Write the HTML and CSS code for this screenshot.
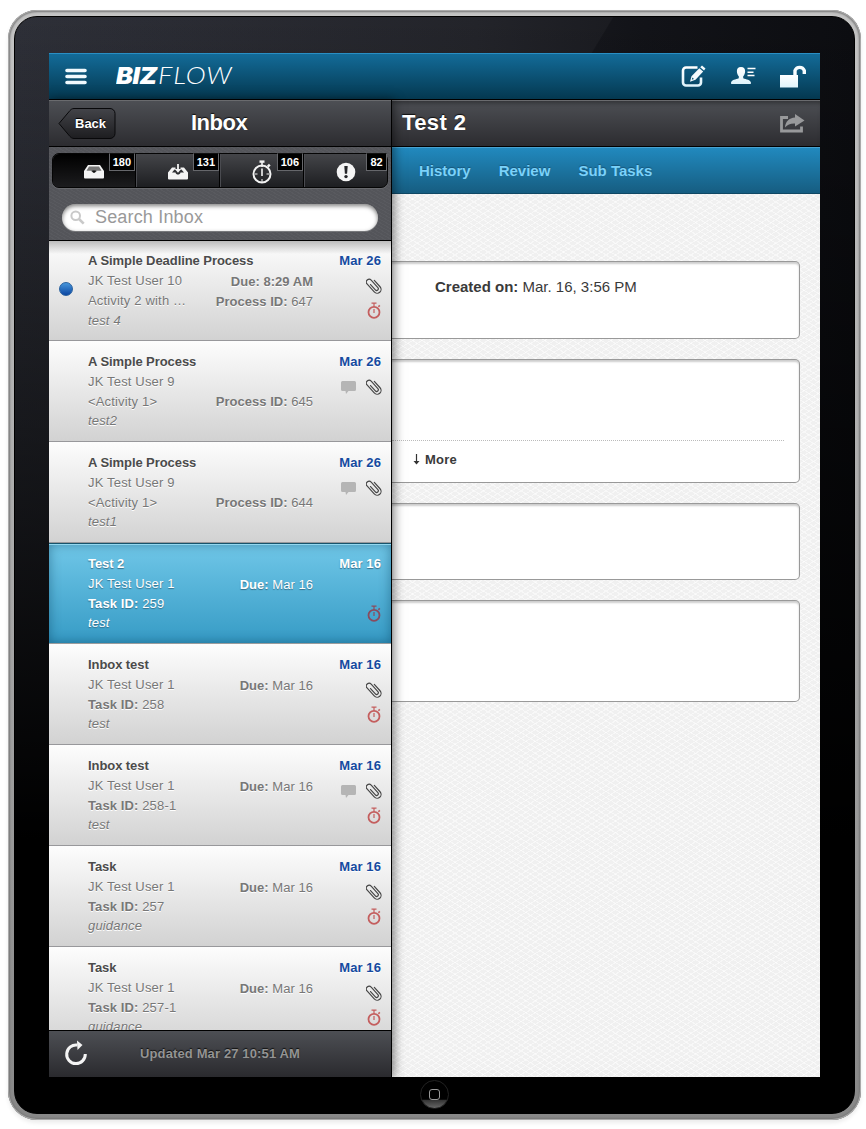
FILE: index.html
```html
<!DOCTYPE html>
<html lang="en">
<head>
<meta charset="utf-8">
<title>BizFlow Inbox</title>
<link rel="stylesheet" href="styles.css">
</head>
<body>
<svg class="defs" width="0" height="0">
  <defs>
    <linearGradient id="ice" x1="0" y1="0" x2="0" y2="1"><stop offset="0" stop-color="#fff"/><stop offset="1" stop-color="#dff3fb"/></linearGradient>
    <symbol id="clip" viewBox="0 0 16 18"><g transform="rotate(-42 8 9)" fill="none" stroke="#444" stroke-width="1.15" stroke-linecap="round"><path d="M12 5v8.600a3.900 3.900 0 0 1-7.800 0V2.800a2.800 2.800 0 0 1 5.600 0v10a1.700 1.700 0 0 1-3.400 0V5.600"/></g></symbol>
    <symbol id="watch" viewBox="0 0 14 17"><g fill="none" stroke="currentColor"><circle cx="7" cy="10.3" r="5.5" stroke-width="1.8"/><path d="M4.500 1.200h5M7 1v3.500M7 7v4" stroke-width="1.200"/><path d="M11.400 4.800l1.400-1.400" stroke-width="1.600"/></g></symbol>
    <symbol id="bubble" viewBox="0 0 15 13"><path d="M1.500 0h12A1.500 1.500 0 0 1 15 1.500v7a1.500 1.500 0 0 1-1.500 1.500H7.500L5 13l-.5-3h-3A1.500 1.500 0 0 1 0 8.500v-7A1.500 1.500 0 0 1 1.500 0z" fill="#b5b5b5"/></symbol>
  </defs>
</svg>
<div class="device">
 <div class="bezel">
  <div class="screen">
   <header class="topbar">
    <svg class="menu" width="22" height="17" viewBox="0 0 22 17"><path d="M2 2.500h18M2 8.500h18M2 14.500h18" stroke="#f1fafe" stroke-width="3.600" stroke-linecap="round"/></svg>
    <div class="logo"><b>BIZ</b><span>FLOW</span></div>
    <div class="actions">
     <svg width="25" height="24" viewBox="0 0 25 24"><path d="M16.500 3.500H5a3 3 0 0 0-3 3v12a3 3 0 0 0 3 3h12a3 3 0 0 0 3-3v-5" fill="none" stroke="url(#ice)" stroke-width="2.600"/><path d="M21 1.500l3.500 3-1.500 2-3.800-3.200zM18.300 4.200l3.900 3.300-7.700 8.300-5.500 1.900 1.500-5.500z" fill="#f4fbfe"/><path d="M11.300 13.500l1.700 1.600-2.200.7z" fill="#0b5575"/></svg>
     <svg width="26" height="20" viewBox="0 0 26 20"><path d="M11 1c3 0 4.300 1.900 4.100 4.500-.1 2.200-.9 3.800-1.900 4.800v2c3 1.200 7.300 1.500 7.800 4.500.1 1-.3 1.200-1 1.200H2c-.7 0-1.100-.2-1-1.200.5-3 4.800-3.300 7.800-4.500v-2c-1-1-1.800-2.600-1.900-4.800C6.700 2.900 8 1 11 1z" fill="url(#ice)"/><path d="M17.500 2.600h8M17.500 6.200h6M17.500 9.600h7" stroke="#fff" stroke-width="1.500"/></svg>
     <svg width="26" height="24" viewBox="0 0 26 24"><path d="M0 11h18v12.500H0z" fill="url(#ice)"/><path d="M15 12V6.500a5 5 0 0 1 9.300 0V10" fill="none" stroke="#f8fdff" stroke-width="3.400"/></svg>
    </div>
   </header>
   <div class="body">
    <aside class="side">
     <div class="titlebar">
      <div class="back"><svg width="58" height="33" viewBox="0 0 58 33"><defs><linearGradient id="bk" x1="0" y1="0" x2="0" y2="1"><stop offset="0" stop-color="#434449"/><stop offset="1" stop-color="#1d1d20"/></linearGradient></defs><path d="M16 1.500h36a5 5 0 0 1 5 5v20a5 5 0 0 1-5 5H16c-2 0-3-1-4-2L1 16.500 12 3.500c1-1 2-2 4-2z" fill="url(#bk)" stroke="#08080a"/></svg><span>Back</span></div>
      <h1>Inbox</h1>
     </div>
     <div class="filters">
      <nav class="tabs">
       <div class="tab on"><svg width="22" height="16" viewBox="0 0 22 16"><path d="M5 1h12l4 6v6.500a1 1 0 0 1-1 1H2a1 1 0 0 1-1-1V7z" fill="#f4f4f4"/><path d="M6 2.500h10l2.500 4.300h-4.700c-.5 2.400-5.100 2.400-5.600 0H3.500z" fill="#777"/><path d="M9.300 6.500h3.400v1.200L11 9 9.300 7.700z" fill="#111"/></svg><i>180</i></div>
       <div class="tab"><svg width="22" height="18" viewBox="0 0 22 18"><path d="M5 4.500h3.500v2H7.500L5 9.500h3.500c.5 2.800 4.500 2.800 5 0H17l-2.500-3h-1v-2H17l4 5v6a1 1 0 0 1-1 1H2a1 1 0 0 1-1-1v-6z" fill="#f4f4f4"/><path d="M10.100 1h1.800v5h2.300L11 9.800 7.800 6h2.300z" fill="#f4f4f4"/></svg><i>131</i></div>
       <div class="tab"><svg width="22" height="24" viewBox="0 0 22 24"><g fill="none" stroke="#f3f3f3"><circle cx="11" cy="14" r="8.500" stroke-width="2"/><path d="M8.500 1.600h5" stroke-width="2.400"/><path d="M11 2v5M11 8.500V16" stroke-width="1.600"/><path d="M16.800 6.700l2-2" stroke-width="2.400"/><path d="M4 14h2.500M15.500 14H18M11 19v3" stroke-width="1"/></g></svg><i>106</i></div>
       <div class="tab"><svg width="20" height="20" viewBox="0 0 20 20"><circle cx="10" cy="10" r="9.300" fill="#f5f5f5"/><path d="M8.300 4h3.400l-.6 7.800H8.900z" fill="#252629"/><circle cx="10" cy="14.600" r="1.700" fill="#252629"/></svg><i>82</i></div>
      </nav>
      <div class="search"><svg width="15" height="15" viewBox="0 0 15 15"><circle cx="5.700" cy="5.700" r="4.300" fill="none" stroke="#c9c9c9" stroke-width="2"/><path d="M9 9l4.700 4.700" stroke="#c9c9c9" stroke-width="2.600"/></svg><span>Search Inbox</span></div>
     </div>
     <div class="list">
      <div class="row first"><div class="mark"><div class="dot"></div></div><div class="left"><h2>A Simple Deadline Process</h2><p>JK Test User 10</p><p>Activity 2 with …</p><em class="low">test 4</em></div><div class="mid"><p><b>Due: 8:29 AM</b></p><p><b>Process ID:</b> 647</p></div><div class="right"><h3>Mar 26</h3><svg class="c"><use href="#clip"/></svg><svg class="w"><use href="#watch"/></svg></div></div>
      <div class="row plain"><div class="mark"></div><div class="left"><h2>A Simple Process</h2><p>JK Test User 9</p><p>&lt;Activity 1&gt;</p><em>test2</em></div><div class="mid"><p></p><p><b>Process ID:</b> 645</p></div><div class="right"><h3>Mar 26</h3><svg class="b"><use href="#bubble"/></svg><svg class="c"><use href="#clip"/></svg></div></div>
      <div class="row plain"><div class="mark"></div><div class="left"><h2>A Simple Process</h2><p>JK Test User 9</p><p>&lt;Activity 1&gt;</p><em>test1</em></div><div class="mid"><p></p><p><b>Process ID:</b> 644</p></div><div class="right"><h3>Mar 26</h3><svg class="b"><use href="#bubble"/></svg><svg class="c"><use href="#clip"/></svg></div></div>
      <div class="row sel"><div class="mark"></div><div class="left"><h2>Test 2</h2><p>JK Test User 1</p><p><b>Task ID:</b> 259</p><em>test</em></div><div class="mid"><p><b>Due:</b> Mar 16</p></div><div class="right"><h3>Mar 16</h3><svg class="w"><use href="#watch"/></svg></div></div>
      <div class="row"><div class="mark"></div><div class="left"><h2>Inbox test</h2><p>JK Test User 1</p><p><b>Task ID:</b> 258</p><em>test</em></div><div class="mid"><p><b>Due:</b> Mar 16</p></div><div class="right"><h3>Mar 16</h3><svg class="c"><use href="#clip"/></svg><svg class="w"><use href="#watch"/></svg></div></div>
      <div class="row"><div class="mark"></div><div class="left"><h2>Inbox test</h2><p>JK Test User 1</p><p><b>Task ID:</b> 258-1</p><em>test</em></div><div class="mid"><p><b>Due:</b> Mar 16</p></div><div class="right"><h3>Mar 16</h3><svg class="b"><use href="#bubble"/></svg><svg class="c"><use href="#clip"/></svg><svg class="w"><use href="#watch"/></svg></div></div>
      <div class="row"><div class="mark"></div><div class="left"><h2>Task</h2><p>JK Test User 1</p><p><b>Task ID:</b> 257</p><em>guidance</em></div><div class="mid"><p><b>Due:</b> Mar 16</p></div><div class="right"><h3>Mar 16</h3><svg class="c"><use href="#clip"/></svg><svg class="w"><use href="#watch"/></svg></div></div>
      <div class="row"><div class="mark"></div><div class="left"><h2>Task</h2><p>JK Test User 1</p><p><b>Task ID:</b> 257-1</p><em>guidance</em></div><div class="mid"><p><b>Due:</b> Mar 16</p></div><div class="right"><h3>Mar 16</h3><svg class="c"><use href="#clip"/></svg><svg class="w"><use href="#watch"/></svg></div></div>
     </div>
     <footer class="status"><svg width="24" height="26" viewBox="0 0 24 26"><path d="M13.500 5.100A9.300 9.300 0 1 0 21.300 14" fill="none" stroke="#f4f4f4" stroke-width="3"/><path d="M13 .5l5.500 4.500-5 5z" fill="#f4f4f4"/></svg><span>Updated Mar 27 10:51 AM</span></footer>
    </aside>
    <main class="detail">
     <div class="titlebar"><h1>Test 2</h1><svg width="26" height="20" viewBox="0 0 26 20"><path d="M9 3.500H2.500v13.500h20V12.500" fill="none" stroke="#98999b" stroke-width="2.800"/><path d="M16 0l9.500 6.500-9.500 6V9.500C11.500 9.300 8.500 10.500 6 13.500 6.500 7.500 10 4 16 3.500z" fill="#98999b"/></svg></div>
     <nav class="links"><span>History</span><span>Review</span><span>Sub Tasks</span></nav>
     <div class="cards">
      <section class="card k1"><p><b>Created on:</b> Mar. 16, 3:56 PM</p></section>
      <section class="card k2"><div class="more"><svg width="7" height="11" viewBox="0 0 7 11"><path d="M3.500 0v9" stroke="#333" stroke-width="1.200"/><path d="M.5 7h6l-3 3.500z" fill="#333"/></svg><b>More</b></div></section>
      <section class="card k3"></section>
      <section class="card k4"></section>
     </div>
    </main>
   </div>
  </div>
  <div class="home"><div></div></div>
 </div>
</div>
</body>
</html>
```

FILE: styles.css
```css
* { box-sizing: border-box; }
body { margin: 0; height: 1129px; overflow: hidden; background: #fff; font-family: "Liberation Sans", Arial, sans-serif; padding: 10px 0 0 8px; }
h1, h2, h3, p { margin: 0; }
.defs { position: absolute; }
svg { display: block; flex: none; }
.device { width: 853px; height: 1110px; padding: 6px; border-radius: 29px; background: linear-gradient(#c4c4c4, #aaa 50%, #888); box-shadow: inset 0 0 0 1px #aaa, inset 0 0 2px 2px #777, 0 3px 4px rgba(0,0,0,.08); }
.bezel { width: 841px; height: 1098px; border: 1px solid #000; border-radius: 23px; padding: 36px 0 0 34px; background: linear-gradient(to bottom, rgba(0,0,0,0), #000 75%), linear-gradient(121deg, rgba(255,255,255,.03) 39.9%, transparent 40%), linear-gradient(to right, #272932, #1c1d23 55%, #121318 75%, #0c0d11); }
.screen { width: 771px; height: 1024px; display: flex; flex-direction: column; overflow: hidden; }
.topbar { height: 47px; flex: none; display: flex; align-items: center; border-top: 1px solid #2a8fc4; border-bottom: 1px solid #000; background: linear-gradient(#136b98, #043850); padding: 0 14px 0 16px; }
.logo { display: flex; align-items: baseline; margin-left: 29px; color: #fff; line-height: 26px; margin-top: -3px; width: 125px; white-space: nowrap; }
.logo b { display: block; width: 42px; font: italic 900 23px/26px Inter, sans-serif; letter-spacing: -.4px; transform: scaleX(1.1); transform-origin: left; }
.logo span { display: block; font: italic 300 23.500px/26px Lato, sans-serif; letter-spacing: .8px; transform: scaleX(1.15); transform-origin: left; }
.actions { margin-left: auto; display: flex; gap: 24px; align-items: center; margin-top: -2px; }
.body { flex: 1; min-height: 0; display: flex; }
.side { width: 343px; border-right: 1px solid #000; display: flex; flex-direction: column; flex: none; position: relative; z-index: 1; box-shadow: 2px 0 10px rgba(0,0,0,.5); }
.titlebar { height: 47px; flex: none; display: flex; align-items: center; background: linear-gradient(#4d4f54, #2c2c30); border-top: 1px solid #6a6b6e; border-bottom: 1px solid #000; color: #fff; }
.titlebar h1 { font-size: 22px; line-height: 26px; padding-bottom: 2px; letter-spacing: .4px; text-shadow: 0 -1px 1px #111; }
.back { display: grid; margin-left: 9px; width: 58px; }
.back > * { grid-area: 1 / 1; }
.back span { align-self: center; padding-left: 17px; font-size: 13px; font-weight: bold; text-shadow: 0 -1px 1px #000; }
.side .titlebar h1 { margin-left: 75px; letter-spacing: -.5px; }
.filters { height: 94px; flex: none; border-bottom: 1px solid #000; background: repeating-linear-gradient(30deg, rgba(255,255,255,.03) 0 1px, transparent 1px 3px), #54555a; padding: 6px 3px 0; }
.tabs { display: flex; height: 35px; border: 1px solid #050505; border-radius: 7px; background: linear-gradient(#444549, #1d1e21); box-shadow: 0 1px 0 #68696d; }
.tab { flex: 1; display: grid; place-items: center; position: relative; border-right: 1px solid #000; border-left: 1px solid #4a4b50; padding: 3px 1px 0 0; }
.tab:last-child { border-right: 0; }
.tab:first-child { border-left: 0; }
.tab.on { background: linear-gradient(#000, #1c1c1e); border-radius: 6px 0 0 6px; }
.tab i { position: absolute; right: 0; top: -1px; height: 18px; min-width: 21px; padding: 0 3px; border: 1px solid #66676b; border-top-color: #111; background: #000; color: #fff; font: bold 11px/17px "Liberation Sans", sans-serif; text-align: center; }
.search { margin: 16px 10px 0; height: 27px; border-radius: 14px; background: #fff; box-shadow: inset 0 2px 4px rgba(0,0,0,.5), 0 1px 0 #77787b; display: flex; align-items: center; padding-left: 8px; gap: 10px; font-size: 18px; letter-spacing: .17px; color: #999; }
.list { flex: 1; min-height: 0; overflow: hidden; position: relative; }
.list::before { content: ""; position: absolute; inset: 0 0 auto; height: 13px; background: linear-gradient(#bbb, rgba(190,190,190,0)); }
.row { height: 101px; display: flex; padding-top: 11px; background: linear-gradient(#fdfdfd, #d2d2d2); border-bottom: 1px solid #98989b; color: #777; font-size: 13px; line-height: 20px; text-shadow: 0 1px 0 #fff; }
.row.first { height: 100px; padding-top: 10px; }
.mark { width: 39px; flex: none; padding: 31px 0 0 10px; }
.dot { width: 14px; height: 14px; border-radius: 50%; border: 1px solid #27609f; background: linear-gradient(#4796db, #0b46a2); }
.left { width: 115px; flex: none; white-space: nowrap; letter-spacing: .17px; }
.left h2 { font-size: 13px; line-height: 20px; color: #4b4b4b; letter-spacing: -.07px; }
.left b { letter-spacing: .1px; }
.left em { display: block; line-height: 18px; }
.left em.low { line-height: 20px; }
.mid { width: 110px; text-align: right; padding-top: 21px; white-space: nowrap; letter-spacing: .03px; }
.plain .mid { padding-top: 20px; }
.mid p { height: 20px; }
.right { margin-left: 18px; width: 50px; display: grid; grid-template: 21px 26px 26px / 25px 25px; }
.right h3 { grid-area: 1 / 1 / 2 / 3; font-size: 13px; line-height: 20px; color: #154aa0; text-align: right; letter-spacing: .1px; }
.right .b { grid-area: 2 / 1; width: 15px; height: 13px; margin: 8px 0 0 10px; }
.right .c { grid-area: 2 / 2; width: 16px; height: 18px; margin: 5px 0 0 9.500px; }
.right .w { grid-area: 3 / 2; width: 14px; height: 17px; margin: 4px 0 0 10.500px; color: #c45e5e; }
.sel { background: linear-gradient(#70c7e8, #369bc5); color: #fff; text-shadow: 0 1px 1px #356f8a; border-bottom-color: #9c9c9c; border-top: 1px solid #17546c; padding-top: 10px; box-shadow: inset 0 2px 0 -1px #93d8f0, inset 0 0 12px rgba(0,50,80,.45); }
.sel .left h2, .sel .right h3 { color: #fff; }
.sel .right .w { color: #8a4b5d; }
.status { height: 47px; flex: none; border-top: 1px solid #000; background: linear-gradient(#4d4f54, #2a2a2e); display: flex; align-items: center; padding: 0 0 2px 15px; gap: 52px; color: #949494; font-size: 13px; font-weight: bold; letter-spacing: .13px; text-shadow: 0 -1px 1px #111; white-space: nowrap; }
.detail { flex: 1; display: flex; flex-direction: column; background: repeating-linear-gradient(32deg, rgba(255,255,255,.5) 0 1px, transparent 1px 5px), repeating-linear-gradient(-32deg, rgba(255,255,255,.5) 0 1px, transparent 1px 5px), #f0f0f0; }
.detail .titlebar { justify-content: space-between; padding: 0 15px 0 10px; box-shadow: inset 0 5px 5px -3px rgba(0,0,0,.4); }
.links { height: 47px; flex: none; border-top: 1px solid #48a2d0; border-bottom: 1px solid #104864; background: linear-gradient(#2189be, #165d81); display: flex; align-items: center; gap: 28px; padding-left: 27px; color: #7bd2fa; font-weight: bold; font-size: 15px; text-shadow: 0 -1px 1px #17567a; }
.cards { padding: 67px 20px 0 0; display: flex; flex-direction: column; gap: 20px; }
.card { border: 1px solid #999; border-left: 0; border-radius: 0 5px 5px 0; background: #fff; box-shadow: inset 0 2px 2px rgba(0,0,0,.2); color: #3a3a3a; }
.k1 { height: 78px; padding: 16px 0 0 43px; font-size: 15px; line-height: 18px; }
.k2 { height: 124px; padding: 80px 15px 0 0; }
.k3 { height: 77px; }
.k4 { height: 102px; }
.more { border-top: 1px dotted #bbb; height: 38px; padding-left: 21px; display: flex; align-items: center; gap: 5px; font-size: 13px; letter-spacing: .2px; }
.home { width: 29px; height: 29px; margin: 3px auto 0 371px; border-radius: 50%; border: 1px solid #222; background: linear-gradient(#000 0 68%, #333 70%, #666); display: grid; place-items: center; }
.home div { width: 11px; height: 11px; border: 1px solid #999; border-radius: 3px; background: #000; }
```
